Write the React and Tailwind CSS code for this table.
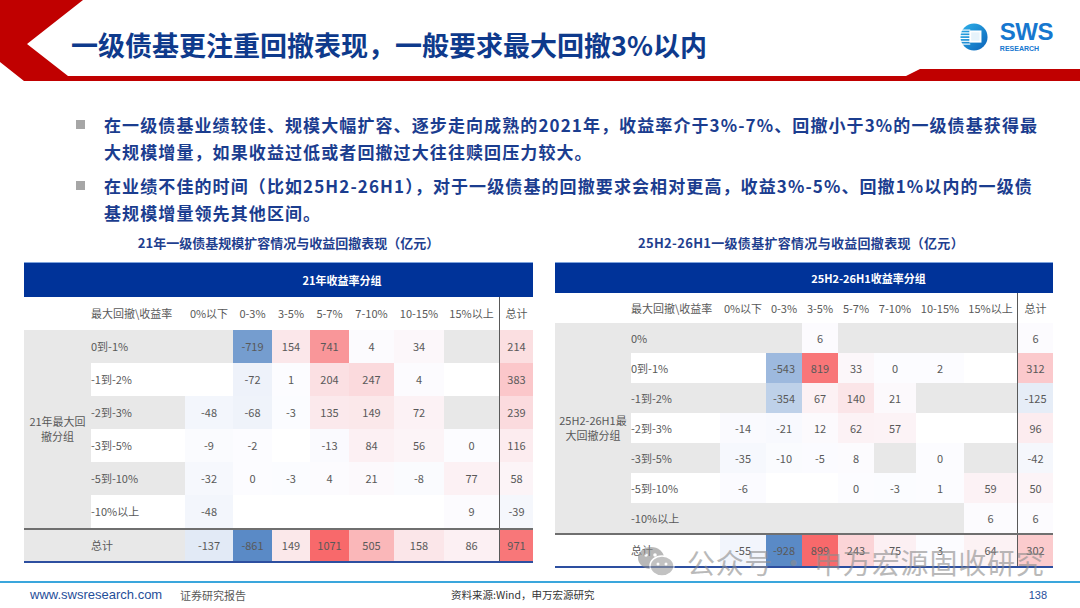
import React from "react";

function heat(v, max, min) {
  if (v === "" || v === null) return null;
  let t, c;
  if (v > 0) {
    t = Math.min(v / max, 1);
    c = [248, 105, 107];
  } else if (v < 0) {
    t = Math.min(v / min, 1);
    c = [90, 138, 198];
  } else {
    t = 0;
    c = [252, 252, 255];
  }
  const w = [252, 252, 255];
  const mix = (i) => Math.round(w[i] + (c[i] - w[i]) * t);
  return `rgb(${mix(0)},${mix(1)},${mix(2)})`;
}

const HEADS = ["0%以下", "0-3%", "3-5%", "5-7%", "7-10%", "10-15%", "15%以上"];

const LEFT = {
  title: "21年一级债基规模扩容情况与收益回撤表现（亿元）",
  titleCls: "pl-[20px]",
  band: "21年收益率分组",
  group: "21年最大回撤分组",
  width: "w-[509px]",
  cols: "grid-cols-[67px_94px_48px_39px_38px_39px_45px_50px_55px_34px]",
  sub: "grid-cols-[94px_48px_39px_38px_39px_45px_50px_55px_34px]",
  groupW: "w-[67px]",
  bandH: "h-[35px]",
  headH: "h-[33px]",
  rowH: "h-[33px]",
  max: 1071,
  min: -861,
  totalGray: true,
  rows: [
    ["0到-1%", "", -719, 154, 741, 4, 34, "", 214],
    ["-1到-2%", "", -72, 1, 204, 247, 4, "", 383],
    ["-2到-3%", -48, -68, -3, 135, 149, 72, "", 239],
    ["-3到-5%", -9, -2, "", -13, 84, 56, 0, 116],
    ["-5到-10%", -32, 0, -3, 4, 21, -8, 77, 58],
    ["-10%以上", -48, "", "", "", "", "", 9, -39],
  ],
  total: [-137, -861, 149, 1071, 505, 158, 86, 971],
};

const RIGHT = {
  title: "25H2-26H1一级债基扩容情况与收益回撤表现（亿元）",
  titleCls: "pr-[6px] tracking-[0.3px]",
  band: "25H2-26H1收益率分组",
  group: "25H2-26H1最大回撤分组",
  width: "w-[498px]",
  cols: "grid-cols-[76px_89px_46px_36px_36px_36px_42px_48px_53px_36px]",
  sub: "grid-cols-[89px_46px_36px_36px_36px_42px_48px_53px_36px]",
  groupW: "w-[76px]",
  bandH: "h-[31px]",
  headH: "h-[30px]",
  rowH: "h-[30px]",
  max: 899,
  min: -928,
  totalGray: false,
  rows: [
    ["0%", "", "", 6, "", "", "", "", 6],
    ["0到-1%", "", -543, 819, 33, 0, 2, "", 312],
    ["-1到-2%", "", -354, 67, 140, 21, "", "", -125],
    ["-2到-3%", -14, -21, 12, 62, 57, "", "", 96],
    ["-3到-5%", -35, -10, -5, 8, "", 0, "", -42],
    ["-5到-10%", -6, "", "", 0, -3, 1, 59, 50],
    ["-10%以上", "", "", "", "", "", "", 6, 6],
  ],
  total: [-55, -928, 899, 243, 75, 3, 64, 302],
};

function ValueCell({ v, t, last }) {
  const bg = heat(v, t.max, t.min);
  return (
    <div
      className={`flex items-center justify-center ${last ? "border-l border-[#595959]" : ""}`}
      style={bg ? { backgroundColor: bg } : undefined}
    >
      {v}
    </div>
  );
}

function HeatTable({ t }) {
  return (
    <div className="flex flex-col">
      <div className={`h-[18px] mb-[10px] text-center text-[13px] leading-[18px] font-bold text-[#1f3f8f] ${t.titleCls}`}>
        {t.title}
      </div>
      <div className={`${t.width} text-[11px] text-[#595959]`}>
        <div className={`grid ${t.cols} ${t.bandH} bg-[#003399] border-t border-[#7ea3dc]`}>
          <div className="col-span-2" />
          <div className="col-span-7 flex items-center justify-center font-bold text-white">{t.band}</div>
          <div />
        </div>
        <div className={`grid ${t.cols} ${t.headH} bg-white`}>
          <div />
          <div className="flex items-center whitespace-nowrap">最大回撤\收益率</div>
          {HEADS.map((h) => (
            <div key={h} className="flex items-center justify-center whitespace-nowrap">{h}</div>
          ))}
          <div className="flex items-center justify-center border-l border-[#595959]">总计</div>
        </div>
        <div className="flex">
          <div className={`${t.groupW} bg-[#e8e8e8] flex items-center justify-center text-center leading-[15px] px-[1px]`}>
            {t.group}
          </div>
          <div className="flex-1">
            {t.rows.map((r, i) => (
              <div
                key={r[0]}
                className={`grid ${t.sub} ${t.rowH} ${i % 2 === 0 ? "bg-[#e8e8e8]" : "bg-white"}`}
              >
                <div className="flex items-center">{r[0]}</div>
                {r.slice(1).map((v, j) => (
                  <ValueCell key={j} v={v} t={t} last={j === 7} />
                ))}
              </div>
            ))}
          </div>
        </div>
        <div
          className={`grid ${t.cols} h-[35px] border-t-2 border-t-[#6f6f6f] border-b-2 border-b-[#2d4fa0] ${
            t.totalGray ? "bg-[#e8e8e8]" : "bg-white"
          }`}
        >
          <div />
          <div className="flex items-center">总计</div>
          {t.total.map((v, j) => (
            <ValueCell key={j} v={v} t={t} last={j === 7} />
          ))}
        </div>
      </div>
    </div>
  );
}

function Logo() {
  return (
    <div className="flex items-center gap-[12px]">
      <svg width="28" height="28" viewBox="0 0 30 30">
        <defs>
          <linearGradient id="lg" x1="0" y1="0" x2="1" y2="1">
            <stop offset="0" stopColor="#2fb2ea" />
            <stop offset="1" stopColor="#0a62b8" />
          </linearGradient>
        </defs>
        <circle cx="15" cy="15" r="14.5" fill="url(#lg)" />
        {[7, 10, 13, 16, 19, 22].map((y) => (
          <rect key={y} x="0" y={y} width="11" height="1.2" fill="#fff" />
        ))}
        <rect x="10" y="8" width="13" height="13" fill="#fff" />
        <rect x="12" y="10" width="9" height="9" fill="#e6f3fb" />
      </svg>
      <div className="flex flex-col leading-none">
        <span className="text-[24px] font-black tracking-[-0.5px] text-[#1677cf] font-['Liberation_Sans',sans-serif] leading-[20px]">SWS</span>
        <span className="text-[7px] font-bold text-[#1677cf] font-['Liberation_Sans',sans-serif] mt-[3px]">RESEARCH</span>
      </div>
    </div>
  );
}

function WeChat() {
  return (
    <svg width="38" height="32" viewBox="0 0 38 32">
      <ellipse cx="14" cy="12" rx="13" ry="11" fill="#8a8a8a" />
      <ellipse cx="25" cy="20" rx="12" ry="10" fill="#9a9a9a" stroke="#fff" strokeWidth="1.5" />
      <circle cx="9" cy="9" r="1.8" fill="#fff" />
      <circle cx="18" cy="9" r="1.8" fill="#fff" />
      <circle cx="21" cy="18" r="1.5" fill="#fff" />
      <circle cx="29" cy="18" r="1.5" fill="#fff" />
    </svg>
  );
}

export default function App() {
  return (
    <div className="relative w-[1080px] h-[608px] bg-white overflow-hidden font-['Noto_Sans_CJK_SC',sans-serif]">
      {/* header */}
      <div className="relative h-[82px]">
        <svg className="absolute left-0 top-0" width="1080" height="82" viewBox="0 0 1080 82">
          <polygon points="0,0 83,0 27,44 68,76 68,81 24,81 0,62" fill="#c00000" />
          <rect x="60" y="76" width="850" height="5" fill="#c00000" />
          <polygon points="906,76 920,69 1080,69 1080,81 906,81" fill="#c00000" />
        </svg>
        <div className="relative flex items-start justify-between pl-[71px] pr-[27px] pt-[28px]">
          <h1 className="text-[27px] leading-[34px] font-bold text-[#0e3a8c]">
            一级债基更注重回撤表现，一般要求最大回撤3%以内
          </h1>
          <div className="-mt-[6px]">
            <Logo />
          </div>
        </div>
      </div>

      {/* bullets */}
      <div className="flex flex-col gap-[7px] pl-[76px] pt-[29px] pr-[20px] text-[17px] leading-[27px] font-bold text-[#1b3d8f]">
        <div className="flex">
          <span className="w-[9px] h-[9px] bg-[#a6a6a6] mt-[9px] mr-[19px] shrink-0" />
          <p className="tracking-[1.1px] whitespace-nowrap">
            在一级债基业绩较佳、规模大幅扩容、逐步走向成熟的2021年，收益率介于3%-7%、回撤小于3%的一级债基获得最
            <br />
            大规模增量，如果收益过低或者回撤过大往往赎回压力较大。
          </p>
        </div>
        <div className="flex">
          <span className="w-[9px] h-[9px] bg-[#a6a6a6] mt-[9px] mr-[19px] shrink-0" />
          <p className="tracking-[1.1px] whitespace-nowrap">
            在业绩不佳的时间（比如25H2-26H1），对于一级债基的回撤要求会相对更高，收益3%-5%、回撤1%以内的一级债
            <br />
            基规模增量领先其他区间。
          </p>
        </div>
      </div>

      {/* tables */}
      <div className="flex items-start gap-[22px] pl-[24px] pt-[8px]">
        <HeatTable t={LEFT} />
        <HeatTable t={RIGHT} />
      </div>

      {/* footer */}
      <div className="mt-[13px] border-t-2 border-[#3aa6dc] h-[26px] flex items-center px-[30px] text-[#595959]">
        <span className="text-[13px] text-[#1f4e99] font-['Liberation_Sans',sans-serif] w-[150px]">www.swsresearch.com</span>
        <span className="text-[11px]">证券研究报告</span>
        <span className="text-[10.5px] ml-[205px] text-[#333]">资料来源:Wind，申万宏源研究</span>
        <span className="ml-auto text-[11px] text-[#1f4e99] font-['Liberation_Sans',sans-serif] pr-[3px]">138</span>
      </div>

      {/* watermark */}
      <div className="absolute left-[637px] top-[545px] flex items-center opacity-60 pointer-events-none text-[28px] leading-[34px] text-[#8c8c8c] tracking-[0.8px]">
        <WeChat />
        <span className="ml-[12px]">公众号</span>
        <span className="ml-[6px]">·</span>
        <span className="ml-[6px]">申万宏源固收研究</span>
      </div>
    </div>
  );
}
